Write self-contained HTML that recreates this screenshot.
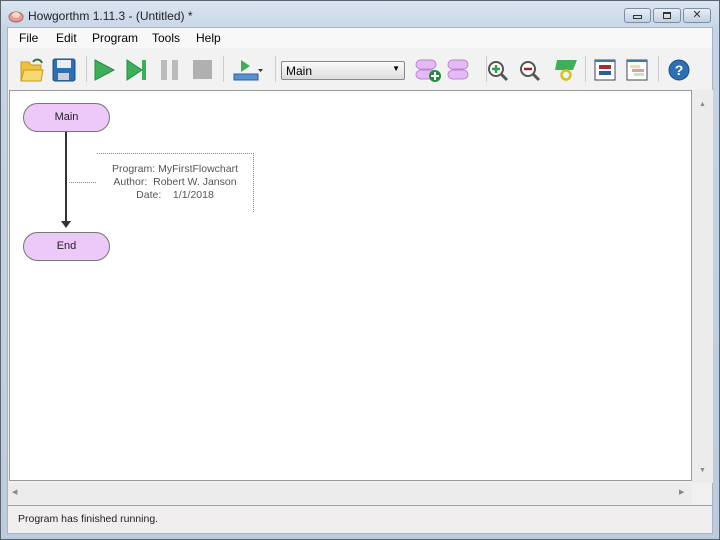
<!DOCTYPE html>
<html><head><meta charset="utf-8"><style>
*{margin:0;padding:0;box-sizing:border-box}
body{width:720px;height:540px;overflow:hidden;font-family:"Liberation Sans",sans-serif;font-size:12px;color:#000;background:#b9c9dc;position:relative}
.frame{position:absolute;left:0;top:0;width:720px;height:540px;border:1px solid #5a6470;background:linear-gradient(#dbe5f1,#c5d4e6 30px,#bccbdd);}
.title{position:absolute;left:28px;top:9px;font-size:12px;color:#222}
.win{position:absolute;left:7px;top:27px;width:706px;height:507px;background:#f0f0f0;border:1px solid #a8b4c2}
.menu{position:absolute;left:0;top:0;width:704px;height:20px;background:#f8f8f8}
.menu span{position:absolute;top:3px;font-size:12px}
.tb{position:absolute;left:0;top:20px;width:704px;height:41px;background:#f2f2f2}
.canvas{position:absolute;left:1px;top:62px;width:683px;height:391px;background:#fff;border:1px solid #9a9a9a}
.vs{position:absolute;left:684px;top:62px;width:21px;height:393px;background:#ececec}
.hs{position:absolute;left:0;top:455px;width:684px;height:21px;background:#ececec}
.status{position:absolute;left:0;top:477px;width:704px;height:28px;background:#f0eeee;border-top:1px solid #a0a0a0}
.btn{position:absolute;top:8px;height:15px;border:1px solid #7d8ea3;border-radius:3px;background:linear-gradient(#e8eef6,#c3d0e0)}
.node{position:absolute;width:87px;height:29px;border:1px solid #777;border-radius:15px;background:#ecc9f8;text-align:center;line-height:27px;font-size:11px;color:#222}
.sep{position:absolute;top:8px;width:1px;height:26px;background:#ccc}
</style></head><body>
<div class="frame"></div>
<svg style="position:absolute;left:8px;top:8px" width="16" height="16"><ellipse cx="8" cy="9" rx="7" ry="5" fill="#e89a9a" stroke="#a66"/><ellipse cx="8" cy="7" rx="4" ry="3" fill="#f8d8c8"/></svg>
<div class="title">Howgorthm 1.11.3 - (Untitled) *</div>
<div class="btn" style="left:624px;width:27px"><div style="position:absolute;left:8px;top:6px;width:9px;height:4px;border:1px solid #333"></div></div>
<div class="btn" style="left:653px;width:28px"><div style="position:absolute;left:9px;top:3px;width:8px;height:7px;border:1px solid #333;border-top-width:2px"></div></div>
<div class="btn" style="left:683px;width:28px;text-align:center;font-size:11px;line-height:13px;color:#333">✕</div>
<div class="win">
<div class="menu">
<span style="left:11px">File</span><span style="left:48px">Edit</span><span style="left:84px">Program</span><span style="left:144px">Tools</span><span style="left:188px">Help</span>
</div>
<div class="tb">
<svg style="position:absolute;left:0;top:0" width="704" height="41">
<!-- open -->
<path d="M13 14h8l2 3h10v16H13z" fill="#f0c040" stroke="#c99a20"/><path d="M13 33l3-11h19l-2 11z" fill="#f8d870" stroke="#c99a20"/>
<path d="M25 14a5 5 0 0 1 9 1" stroke="#2a7a3a" stroke-width="2" fill="none"/>
<!-- save -->
<rect x="45" y="11" width="22" height="22" rx="2" fill="#2d6fb0" stroke="#1d4f80"/><rect x="49" y="12" width="14" height="8" fill="#e8eef5"/><rect x="50" y="25" width="11" height="7" fill="#ccd"/>
<line x1="78.5" y1="8" x2="78.5" y2="34" stroke="#ccc"/>
<path d="M87 12l19 10-19 10z" fill="#3fae5a" stroke="#2a8a44"/>
<path d="M119 12l15 10-15 10z" fill="#3fae5a" stroke="#2a8a44"/><rect x="134" y="12" width="4" height="20" fill="#3fae5a"/>
<rect x="153" y="12" width="6" height="20" fill="#bbb"/><rect x="164" y="12" width="6" height="20" fill="#bbb"/>
<rect x="185" y="12" width="19" height="19" fill="#b0b0b0"/>
<line x1="215.5" y1="8" x2="215.5" y2="34" stroke="#ccc"/>
<path d="M233 12l9 6-9 6z" fill="#3fae5a"/><rect x="226" y="26" width="24" height="6" fill="#5a8fd0" stroke="#2d5fa0"/><path d="M250 21h5l-2.5 3z" fill="#333"/>
<line x1="267.5" y1="8" x2="267.5" y2="34" stroke="#ccc"/>
<!-- subs -->
<rect x="408" y="12" width="20" height="9" rx="4.5" fill="#e6b8f5" stroke="#b48ac8"/><rect x="408" y="22" width="20" height="9" rx="4.5" fill="#e6b8f5" stroke="#b48ac8"/><circle cx="427" cy="28" r="6" fill="#2a8a44"/><path d="M427 24v8M423 28h8" stroke="#fff" stroke-width="2"/>
<rect x="440" y="12" width="20" height="9" rx="4.5" fill="#e6b8f5" stroke="#b48ac8"/><rect x="440" y="22" width="20" height="9" rx="4.5" fill="#e6b8f5" stroke="#b48ac8"/>
<line x1="478.5" y1="8" x2="478.5" y2="34" stroke="#ccc"/>
<circle cx="488" cy="21" r="7" fill="#fff" stroke="#555" stroke-width="2"/><path d="M493 26l6 6" stroke="#555" stroke-width="3"/><path d="M488 17v8M484 21h8" stroke="#3a9a50" stroke-width="2.5"/>
<circle cx="520" cy="21" r="7" fill="#fff" stroke="#555" stroke-width="2"/><path d="M525 26l6 6" stroke="#555" stroke-width="3"/><path d="M516 21h8" stroke="#b02020" stroke-width="2.5"/>
<path d="M549 12h20l-4 10h-18z" fill="#3fae5a"/><circle cx="558" cy="27" r="4.5" fill="none" stroke="#d8c020" stroke-width="2.5"/>
<line x1="577.5" y1="8" x2="577.5" y2="34" stroke="#ccc"/>
<rect x="587" y="12" width="20" height="20" fill="#fff" stroke="#445"/><rect x="587" y="12" width="20" height="2" fill="#3a7aa0"/><rect x="591" y="17" width="12" height="4" fill="#a03030"/><rect x="591" y="23" width="12" height="4" fill="#2d5fa0"/>
<rect x="619" y="12" width="20" height="20" fill="#fff" stroke="#445"/><rect x="619" y="12" width="20" height="2" fill="#3a7aa0"/><rect x="622" y="17" width="10" height="3" fill="#f0e0a0"/><rect x="624" y="21" width="12" height="3" fill="#e89a9a"/><rect x="626" y="25" width="10" height="3" fill="#c0e8c0"/>
<line x1="650.5" y1="8" x2="650.5" y2="34" stroke="#ccc"/>
<circle cx="671" cy="22" r="10" fill="#2d6fb0" stroke="#1d4f80"/><text x="671" y="27" font-family="Liberation Sans" font-weight="bold" font-size="14" fill="#fff" text-anchor="middle">?</text>
</svg>
<div style="position:absolute;left:273px;top:13px;width:124px;height:19px;border:1px solid #888;border-radius:2px;background:linear-gradient(#fafafa,#dcdcdc);font-size:12px;padding:2px 4px">Main<span style="position:absolute;right:4px;top:2px;font-size:8px">▼</span></div>
</div>
<div class="canvas">
<div class="node" style="left:13px;top:12px">Main</div>
<div class="node" style="left:13px;top:141px">End</div>
<div style="position:absolute;left:55px;top:41px;width:2px;height:94px;background:#333"></div>
<svg style="position:absolute;left:51px;top:130px" width="10" height="10"><path d="M0 0h10l-5 7z" fill="#333"/></svg>
<div style="position:absolute;left:59px;top:91px;width:27px;border-top:1px dotted #888"></div>
<div style="position:absolute;left:87px;top:62px;width:157px;height:59px;border-top:1px dotted #888;border-right:1px dotted #888;text-align:center;font-size:10.5px;color:#555;line-height:13px;padding-top:9px">Program: MyFirstFlowchart<br>Author:&nbsp; Robert W. Janson<br>Date:&nbsp;&nbsp;&nbsp; 1/1/2018</div>
</div>
<div class="vs"><div style="position:absolute;left:7px;top:11px;font-size:7px;color:#888">▲</div><div style="position:absolute;left:7px;top:377px;font-size:7px;color:#888">▼</div></div>
<div class="hs"><div style="position:absolute;left:4px;top:5px;font-size:7px;color:#888">◀</div><div style="position:absolute;left:671px;top:5px;font-size:7px;color:#888">▶</div></div>
<div class="status"><span style="position:absolute;left:10px;top:7px;font-size:10.5px;color:#222">Program has finished running.</span></div>
</div>
</body></html>
